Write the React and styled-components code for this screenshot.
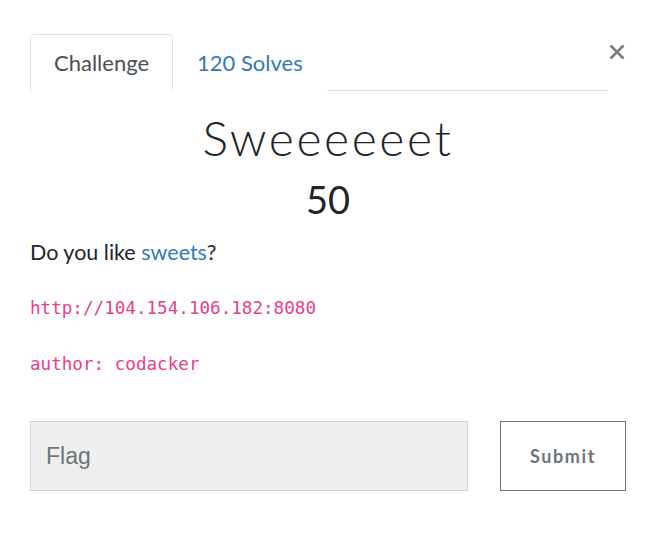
import React from 'react';
import styled, { createGlobalStyle } from 'styled-components';

const GlobalStyle = createGlobalStyle`
  body {
    margin: 0;
    background: #fff;
    font-family: Lato, 'Open Sans', sans-serif;
    color: #212529;
  }
`;

const Modal = styled.div`
  position: relative;
  width: 654px;
  height: 548px;
  box-sizing: border-box;
  padding: 34px 28px 0 30px;
`;

const Close = styled.button`
  position: absolute;
  top: 42px;
  right: 27px;
  border: none;
  background: none;
  padding: 0;
  width: 20px;
  height: 20px;
  cursor: pointer;
`;

const Tabs = styled.nav`
  display: flex;
  margin-right: 18px;
  border-bottom: 1px solid #dee2e6;
`;

const Tab = styled.a`
  display: block;
  padding: 12px 23px 13px;
  font-size: 22px;
  line-height: 31px;
  color: ${(p) => (p.active ? '#495057' : '#337ab7')};
  border: 1px solid ${(p) => (p.active ? '#dee2e6' : 'transparent')};
  border-bottom: none;
  border-radius: 5px 5px 0 0;
  margin-bottom: -1px;
  background: #fff;
  text-decoration: none;
`;

const Title = styled.h2`
  margin: 19px 0 0;
  text-align: center;
  font-family: Lato, sans-serif;
  font-weight: 300;
  font-size: 48px;
  line-height: 56px;
  letter-spacing: 2.6px;
  color: #212529;
`;

const Value = styled.h3`
  margin: 8px 0 0;
  text-align: center;
  font-weight: 400;
  font-size: 38px;
  line-height: 50px;
  color: #212529;
`;

const Desc = styled.div`
  margin-top: 13px;
  font-size: 21.5px;
  line-height: 30px;
`;

const Para = styled.p`
  margin: 0 0 24px;
`;

const Link = styled.a`
  color: #337ab7;
  text-decoration: none;
`;

const Code = styled.code`
  font-family: 'DejaVu Sans Mono', monospace;
  font-size: 17.6px;
  color: #e83e8c;
`;

const SubmitRow = styled.form`
  display: flex;
  margin-top: 42px;
  gap: 32px;
`;

const FlagInput = styled.input`
  width: 438px;
  height: 70px;
  box-sizing: border-box;
  background: #efefef;
  border: 1px solid #d0d4d9;
  padding: 0 15px;
  font-family: 'Liberation Sans', Arial, sans-serif;
  font-size: 23px;
  color: #495057;
  outline: none;
  &::placeholder {
    color: #6c757d;
  }
`;

const SubmitButton = styled.button`
  width: 126px;
  height: 70px;
  box-sizing: border-box;
  background: #fff;
  border: 1px solid #6c757d;
  border-radius: 0;
  font-family: Lato, sans-serif;
  font-weight: 700;
  font-size: 18px;
  letter-spacing: 1.6px;
  color: #6c757d;
  cursor: pointer;
`;

const App = () => {
  return (
    <>
      <GlobalStyle />
      <Modal>
        <Close aria-label="Close">
          <svg width="20" height="20" viewBox="0 0 20 20">
            <path d="M3.5 3.5 L16.5 16.5 M16.5 3.5 L3.5 16.5" stroke="#808080" strokeWidth="2.8" />
          </svg>
        </Close>
        <Tabs>
          <Tab active href="#">Challenge</Tab>
          <Tab href="#">120 Solves</Tab>
        </Tabs>
        <Title>Sweeeeeet</Title>
        <Value>50</Value>
        <Desc>
          <Para>
            Do you like <Link href="#">sweets</Link>?
          </Para>
          <Para>
            <Code>http://104.154.106.182:8080</Code>
          </Para>
          <Para>
            <Code>author: codacker</Code>
          </Para>
        </Desc>
        <SubmitRow onSubmit={(e) => e.preventDefault()}>
          <FlagInput placeholder="Flag" />
          <SubmitButton type="submit">Submit</SubmitButton>
        </SubmitRow>
      </Modal>
    </>
  );
};

export default App;
